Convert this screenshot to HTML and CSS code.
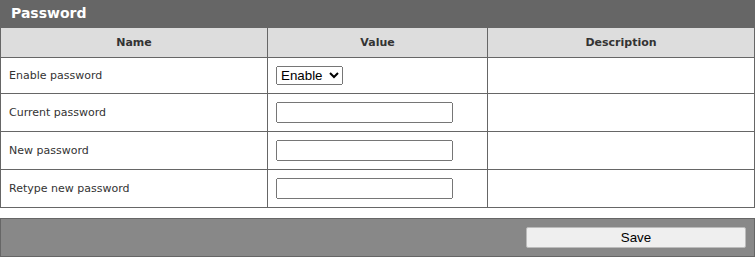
FILE: index.html
```html
<!DOCTYPE html>
<html>
<head>
<meta charset="utf-8">
<title>Password</title>
<link rel="stylesheet" href="styles.css">
</head>
<body>
<div class="panel">
  <div class="panel-title">Password</div>
  <table class="settings">
    <colgroup>
      <col class="col-name">
      <col class="col-value">
      <col class="col-desc">
    </colgroup>
    <thead>
      <tr><th>Name</th><th>Value</th><th>Description</th></tr>
    </thead>
    <tbody>
      <tr>
        <td>Enable password</td>
        <td><select class="sel"><option>Enable</option><option>Disable</option></select></td>
        <td></td>
      </tr>
      <tr>
        <td>Current password</td>
        <td><input class="txt" type="password"></td>
        <td></td>
      </tr>
      <tr>
        <td>New password</td>
        <td><input class="txt" type="password"></td>
        <td></td>
      </tr>
      <tr>
        <td>Retype new password</td>
        <td><input class="txt" type="password"></td>
        <td></td>
      </tr>
    </tbody>
  </table>
  <div class="footer">
    <button class="save" type="button">Save</button>
  </div>
</div>
</body>
</html>
```
FILE: styles.css
```css
html, body {
  margin: 0;
  padding: 0;
  background: #fff;
}
body {
  font-family: "DejaVu Sans", Verdana, sans-serif;
  font-size: 11px;
  color: #333;
}
.panel {
  width: 755px;
}
.panel-title {
  height: 27px;
  line-height: 27px;
  padding: 0 11px;
  background: #666;
  color: #fff;
  font-size: 14px;
  font-weight: bold;
}
.settings {
  width: 755px;
  border-collapse: collapse;
  table-layout: fixed;
}
.col-name { width: 267px; }
.col-value { width: 220px; }
.col-desc { width: 267px; }
.settings th,
.settings td {
  border: 1px solid #666;
  padding: 8px;
  line-height: 13px;
  vertical-align: middle;
}
.settings th {
  background: #ddd;
  font-weight: bold;
  text-align: center;
  color: #333;
}
.settings td {
  text-align: left;
}
.sel {
  font-family: "Liberation Sans", Arial, sans-serif;
  font-size: 13.333px;
  height: 19px;
  vertical-align: middle;
  margin: 0;
}
.txt {
  box-sizing: border-box;
  width: 177px;
  height: 21px;
  margin: 0;
  font-family: "Liberation Sans", Arial, sans-serif;
  font-size: 13.333px;
  vertical-align: middle;
}
.footer {
  margin-top: 10px;
  background: #888;
  border: 1px solid #666;
  padding: 8px 8px;
  display: flex;
  justify-content: flex-end;
}
.save {
  width: 220px;
  height: 21px;
  margin: 0;
  padding: 0;
  background: #efefef;
  border: 1px solid #bbb;
  border-radius: 2px;
  font-family: "Liberation Sans", Arial, sans-serif;
  font-size: 13.333px;
  color: #000;
}
```
